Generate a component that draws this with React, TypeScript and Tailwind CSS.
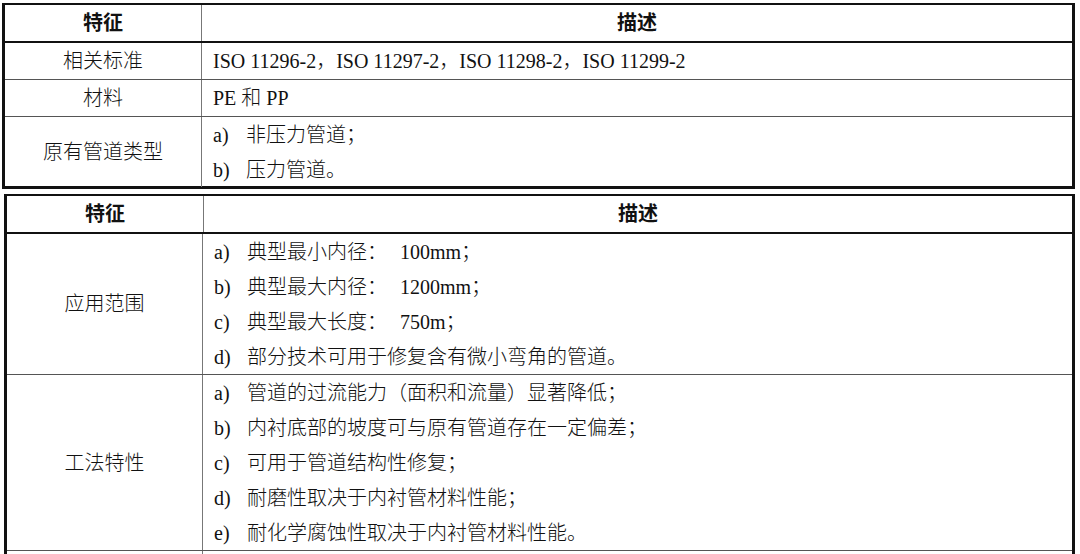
import React from "react";

const font = { fontFamily: '"Liberation Serif", "Noto Sans CJK SC", serif' };

function Item({ label, children }: { label: string; children: React.ReactNode }) {
  return (
    <div className="flex h-[35px] items-center">
      <span className="w-[33px] shrink-0">{label}</span>
      <span>{children}</span>
    </div>
  );
}

function HeaderRow() {
  return (
    <div className="grid grid-cols-[197px_1fr] h-[38px] border-b-[2px] border-[#111]">
      <div className="flex items-center justify-center border-r border-[#777] font-bold">特征</div>
      <div className="flex items-center justify-center font-bold">描述</div>
    </div>
  );
}

export default function App() {
  return (
    <div
      className="w-[1080px] h-[554px] overflow-hidden bg-white text-[20px] text-[#111] font-light pt-[3px] pl-[2px]"
      style={font}
    >
      {/* Table 1 */}
      <div className="w-[1073px] border-x-[3px] border-t-[2px] border-b-[3px] border-[#111]">
        <HeaderRow />
        <div className="grid grid-cols-[197px_1fr] h-[37px] border-b border-[#555]">
          <div className="flex items-center justify-center border-r border-[#777]">相关标准</div>
          <div className="flex items-center pl-[11px]">ISO 11296-2，ISO 11297-2，ISO 11298-2，ISO 11299-2</div>
        </div>
        <div className="grid grid-cols-[197px_1fr] h-[37px] border-b border-[#555]">
          <div className="flex items-center justify-center border-r border-[#777]">材料</div>
          <div className="flex items-center pl-[11px]">PE 和 PP</div>
        </div>
        <div className="grid grid-cols-[197px_1fr] h-[69px]">
          <div className="flex items-center justify-center border-r border-[#777]">原有管道类型</div>
          <div className="flex flex-col justify-center pl-[11px]">
            <Item label="a)">非压力管道；</Item>
            <Item label="b)">压力管道。</Item>
          </div>
        </div>
      </div>

      {/* Table 2 */}
      <div className="ml-[2px] mt-[5px] w-[1071px] border-x-[3px] border-t-[2px] border-[#111]">
        <HeaderRow />
        <div className="grid grid-cols-[196px_1fr] h-[141px] border-b border-[#555]">
          <div className="flex items-center justify-center border-r border-[#777]">应用范围</div>
          <div className="flex flex-col justify-center pl-[11px]">
            <Item label="a)">
              典型最小内径：<span className="ml-[13px]">100mm；</span>
            </Item>
            <Item label="b)">
              典型最大内径：<span className="ml-[13px]">1200mm；</span>
            </Item>
            <Item label="c)">
              典型最大长度：<span className="ml-[13px]">750m；</span>
            </Item>
            <Item label="d)">部分技术可用于修复含有微小弯角的管道。</Item>
          </div>
        </div>
        <div className="grid grid-cols-[196px_1fr] h-[176px] border-b border-[#555]">
          <div className="flex items-center justify-center border-r border-[#777]">工法特性</div>
          <div className="flex flex-col justify-center pl-[11px]">
            <Item label="a)">管道的过流能力（面积和流量）显著降低；</Item>
            <Item label="b)">内衬底部的坡度可与原有管道存在一定偏差；</Item>
            <Item label="c)">可用于管道结构性修复；</Item>
            <Item label="d)">耐磨性取决于内衬管材料性能；</Item>
            <Item label="e)">耐化学腐蚀性取决于内衬管材料性能。</Item>
          </div>
        </div>
        <div className="grid grid-cols-[196px_1fr] h-[20px]">
          <div className="border-r border-[#777]"></div>
          <div></div>
        </div>
      </div>
    </div>
  );
}
